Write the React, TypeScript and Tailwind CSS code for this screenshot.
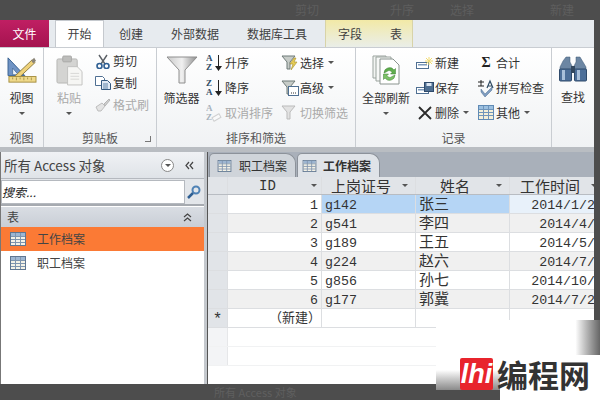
import type { ReactNode } from "react";

const CJK = "font-['Noto_Sans_CJK_SC','Liberation_Sans',sans-serif]";
const MONO = "font-['Liberation_Mono','Noto_Sans_CJK_SC',monospace]";

function TableIcon({ className = "" }: { className?: string }) {
  return (
    <svg viewBox="0 0 16 14" className={className} fill="none">
      <rect x="0.5" y="0.5" width="15" height="13" fill="#f4f2e6" stroke="#5f7691" />
      <rect x="1" y="1" width="14" height="3" fill="#9db6d2" />
      <path d="M1 4.5h14M1 7.5h14M1 10.5h14M5.5 1v12M10.5 1v12" stroke="#7f95ae" />
    </svg>
  );
}

function ViewIcon() {
  return (
    <svg viewBox="0 0 32 30" className="w-[30px] h-[28px]" fill="none">
      <path d="M1 2l18 19H1z" fill="#6f93c4" stroke="#37608f" />
      <path d="M6 13l6 7H6z" fill="#eef3fa" stroke="#37608f" strokeWidth="0.7" />
      <path d="M9 21L27 4l3 3-18 17-5 1z" fill="#efd27a" stroke="#8a7a40" />
      <path d="M26 5l3-3 2 3-3 3z" fill="#8a8478" />
      <rect x="2" y="22" width="29" height="6" fill="#efd98a" stroke="#a48d3e" />
      <path d="M6 23v2M10 23v3M14 23v2M18 23v3M22 23v2M26 23v3" stroke="#8a7530" strokeWidth="0.7" />
    </svg>
  );
}

function PasteIcon() {
  return (
    <svg viewBox="0 0 28 32" className="w-[27px] h-[31px]" fill="none">
      <rect x="1" y="4" width="21" height="25" rx="1.5" fill="#d4d4d2" stroke="#b5b5b3" />
      <rect x="7" y="1" width="9" height="6" rx="1" fill="#bdbdbb" stroke="#a8a8a6" />
      <path d="M12 12h10l5 5v14H12z" fill="#f6f6f4" stroke="#c2c2c0" />
      <path d="M15 19h9M15 22h9M15 25h9" stroke="#d6d6d4" />
    </svg>
  );
}

function ScissorsIcon() {
  return (
    <svg viewBox="0 0 14 15" className="w-[14px] h-[15px]" fill="none">
      <path d="M3 1l6 9M11 1L5 10" stroke="#5b6066" strokeWidth="1.400" />
      <ellipse cx="3.500" cy="12" rx="2.500" ry="2.500" stroke="#2f5f93" strokeWidth="1.600" />
      <ellipse cx="10.500" cy="12" rx="2.500" ry="2.500" stroke="#2f5f93" strokeWidth="1.600" />
    </svg>
  );
}

function CopyIcon() {
  return (
    <svg viewBox="0 0 16 14" className="w-4 h-[14px]" fill="none">
      <path d="M0.500 0.500h7l2 2v7h-9z" fill="#fff" stroke="#4f6f92" />
      <path d="M6.500 4.500h6l3 3v6h-9z" fill="#dfe9f4" stroke="#34597f" />
      <path d="M8 8h5M8 10h5M8 12h5" stroke="#5f83a8" />
    </svg>
  );
}

function BrushIcon() {
  return (
    <svg viewBox="0 0 16 14" className="w-4 h-[14px]" fill="none">
      <path d="M1 9l6-4 3 3-4 5H3z" fill="#e4e4e4" stroke="#bdbdbd" />
      <path d="M9 6l5-5 1 1-5 6z" fill="#cfcfcf" stroke="#b5b5b5" />
    </svg>
  );
}

function FunnelIcon({ className = "w-[32px] h-[28px]" }: { className?: string }) {
  return (
    <svg viewBox="0 0 32 28" className={className} fill="none">
      <defs>
        <linearGradient id="fn" x1="0" x2="1" y1="0" y2="0">
          <stop offset="0" stopColor="#c9c9c9" />
          <stop offset="0.5" stopColor="#f0f0f0" />
          <stop offset="1" stopColor="#8e8e8e" />
        </linearGradient>
      </defs>
      <path d="M1 1h30L19 14v13h-6V14z" fill="url(#fn)" stroke="#8f8f8f" />
    </svg>
  );
}

function SortIcon({ top, bottom, dim }: { top: string; bottom: string; dim?: boolean }) {
  return (
    <span className={`flex items-center w-[18px] h-[18px] ${dim ? "opacity-40" : ""}`}>
      <span className="flex flex-col font-['Liberation_Serif',serif] font-bold text-[9px] leading-[9px] text-[#2f4a63]">
        <span>{top}</span>
        <span>{bottom}</span>
      </span>
      {dim ? (
        <span className="ml-[-1px] w-[9px] h-[5px] rotate-[-30deg] border border-[#999] bg-white self-end mb-[2px]" />
      ) : (
        <svg viewBox="0 0 7 16" className="w-[7px] h-4 ml-[2px]" fill="#222">
          <path d="M3 0h1v11h3l-3.5 5L0 11h3z" />
        </svg>
      )}
    </span>
  );
}

function SmallFunnel({ kind }: { kind: "bolt" | "box" | "dim" }) {
  return (
    <svg viewBox="0 0 18 16" className="w-[18px] h-4" fill="none">
      <path d="M1 1h13L9 7v7H6V7z" fill={kind === "dim" ? "#e2e2e2" : "#c7ccc8"} stroke={kind === "dim" ? "#bbb" : "#6f7a78"} />
      {kind === "bolt" && <path d="M13 3l-4 6h3l-2 6 6-8h-3l2-4z" fill="#e6cc55" stroke="#a58f2b" strokeWidth="0.6" />}
      {kind === "box" && (
        <>
          <rect x="7.5" y="6.5" width="10" height="9" fill="#fff" stroke="#4f6f92" />
          <path d="M10 13h5" stroke="#333" strokeDasharray="1 1" />
        </>
      )}
    </svg>
  );
}

function RefreshIcon() {
  return (
    <svg viewBox="0 0 28 30" className="w-7 h-[30px]" fill="none">
      <path d="M1 1h13v22H1z" fill="#f2f4f2" stroke="#9aa39e" />
      <path d="M4 2h15v24H4z" fill="#f7f8f7" stroke="#9aa39e" />
      <path d="M8 4h13l6 6v19H8z" fill="#fff" stroke="#8a948f" />
      <path d="M12 18a5.5 5.5 0 0 1 10-3l1.500-1.500V19h-5l1.500-1.500a3 3 0 0 0-5-1z" fill="#5fae4d" stroke="#3c7f33" strokeWidth="0.5" />
      <path d="M23 20a5.500 5.500 0 0 1-10 3l-1.500 1.500V19h5L15 20.500a3 3 0 0 0 5 1z" fill="#7cc267" stroke="#3c7f33" strokeWidth="0.5" />
    </svg>
  );
}

function RecordIcon({ star }: { star?: boolean }) {
  return (
    <svg viewBox="0 0 18 14" className="w-[18px] h-[14px]" fill="none">
      <rect x="0.5" y="6.500" width="12" height="6" fill="#fff" stroke="#4f6f92" />
      <rect x="2" y="8" width="9" height="1.500" fill="#7f9cbd" />
      {star ? (
        <path d="M13 1v8M9 5h8M10 2l6 6M16 2l-6 6" stroke="#f2dc72" />
      ) : (
        <>
          <rect x="8.500" y="1.500" width="9" height="9" fill="#4f6f92" stroke="#2f4a6b" />
          <rect x="10.500" y="2" width="5" height="3" fill="#dce6f2" />
        </>
      )}
    </svg>
  );
}

function CrossIcon() {
  return (
    <svg viewBox="0 0 14 14" className="w-[14px] h-[14px]" fill="none">
      <path d="M1 1l12 12M13 1L1 13" stroke="#2b2b2b" strokeWidth="1.800" />
    </svg>
  );
}

function SpellIcon() {
  return (
    <svg viewBox="0 0 18 18" className="w-[18px] h-[18px]" fill="none">
      <path d="M1 3h6M4 1v6M1 7h6" stroke="#222" />
      <path d="M10 9l3-7 3 7M11 7h4" stroke="#2f4a63" strokeWidth="1.200" />
      <path d="M4 10l4 5 7-7v3l-7 7-4-5z" fill="#7e9cc0" stroke="#4f6f92" strokeWidth="0.5" />
    </svg>
  );
}

function GridIcon() {
  return (
    <svg viewBox="0 0 16 15" className="w-4 h-[15px]" fill="none">
      <rect x="0.500" y="0.500" width="15" height="14" fill="#f3efd9" stroke="#5f8ab5" />
      <rect x="1" y="1" width="14" height="3" fill="#9cc0e0" />
      <path d="M1 4.500h14M1 7.500h14M1 10.500h14M5.500 1v13M10.500 1v13" stroke="#6f95bb" />
    </svg>
  );
}

function BinocularIcon() {
  return (
    <svg viewBox="0 0 28 26" className="w-7 h-[26px]" fill="none">
      <path d="M7 1h4v5l2 4v4H1v-3l3-6z" fill="#6c86a3" stroke="#3f5874" strokeWidth="0.5" />
      <path d="M17 1h4l3 5 3 5v3H15v-4l2-4z" fill="#6c86a3" stroke="#3f5874" strokeWidth="0.5" />
      <rect x="0.500" y="13" width="12" height="12" rx="1" fill="#4d6f99" stroke="#2f4a6b" />
      <rect x="15.500" y="13" width="12" height="12" rx="1" fill="#4d6f99" stroke="#2f4a6b" />
      <rect x="3" y="14" width="3" height="10" fill="#a9c0da" />
      <rect x="18" y="14" width="3" height="10" fill="#a9c0da" />
      <rect x="12" y="10" width="4" height="7" fill="#33485f" />
    </svg>
  );
}

function DoubleChevron({ up }: { up?: boolean }) {
  return (
    <svg viewBox="0 0 9 9" className={`w-[9px] h-[9px] ${up ? "" : "-rotate-90"}`} fill="none">
      <path d="M1 4l3.500-3L8 4M1 8l3.500-3L8 8" stroke="#444" strokeWidth="1.200" />
    </svg>
  );
}

function Caret({ className = "" }: { className?: string }) {
  return <span className={`inline-block w-0 h-0 border-x-[3px] border-x-transparent border-t-[3px] border-t-[#555] ${className}`} />;
}

function Group({ label, width, launcher, children }: { label: string; width: string; launcher?: boolean; children: ReactNode }) {
  return (
    <div className={`${width} relative flex flex-col border-r border-[#c9cdd2] shrink-0`}>
      <div className="h-[81px] flex pt-[2px]">{children}</div>
      <div className="h-[18px] flex items-center justify-center text-[12px] leading-none text-[#555]">{label}</div>
      {launcher && <span className="absolute right-[5px] bottom-[5px] w-[6px] h-[6px] border-r border-b border-[#777]" />}
    </div>
  );
}

function Large({ width, icon, label, caret, dim }: { width: string; icon: ReactNode; label: string; caret?: boolean; dim?: boolean }) {
  return (
    <div className={`${width} flex flex-col items-center pt-[2px] ${dim ? "text-[#a9a9a9]" : "text-[#333]"}`}>
      <div className="h-[36px] flex items-center">{icon}</div>
      <div className="text-[12px] leading-[20px]">{label}</div>
      {caret && <Caret className="mt-[4px]" />}
    </div>
  );
}

function Small({ icon, label, caret, dim, height = "h-[25px]" }: { icon: ReactNode; label: string; caret?: boolean; dim?: boolean; height?: string }) {
  return (
    <div className={`${height} flex items-center text-[12px] leading-none whitespace-nowrap ${dim ? "text-[#aaa]" : "text-[#333]"}`}>
      <span className="w-[18px] flex justify-center shrink-0">{icon}</span>
      <span className="ml-[1px]">{label}</span>
      {caret && <Caret className="ml-[4px]" />}
    </div>
  );
}

const rows = [
  { id: 1, code: "g142", name: "张三", date: "2014/1/25" },
  { id: 2, code: "g541", name: "李四", date: "2014/4/5" },
  { id: 3, code: "g189", name: "王五", date: "2014/5/8" },
  { id: 4, code: "g224", name: "赵六", date: "2014/7/3" },
  { id: 5, code: "g856", name: "孙七", date: "2014/10/5" },
  { id: 6, code: "g177", name: "郭冀", date: "2014/7/21" },
];

function Ribbon() {
  return (
    <>
      <div className="h-[27px] flex bg-[#e7ebef] text-[12px] text-[#3f3f3f] shrink-0">
        <div className="w-[49px] bg-gradient-to-b from-[#c01f63] to-[#a5134f] text-white flex items-center justify-center">文件</div>
        <div className="w-[49px] ml-[6px] bg-white border-x border-t border-[#c5c9ce] flex items-center justify-center">开始</div>
        <div className="w-[39px] flex items-center justify-end">创建</div>
        <div className="w-[76px] flex items-center justify-end">外部数据</div>
        <div className="w-[88px] flex items-center justify-end">数据库工具</div>
        <div className="w-[88px] ml-[18px] flex bg-gradient-to-b from-[#f2e9a6] to-[#eaeee8] border-x border-[#d8d3a8]">
          <span className="w-[60px] pl-[12px] flex items-center">字段</span>
          <span className="flex items-center pl-[4px]">表</span>
        </div>
      </div>
      <div className="h-[100px] flex bg-gradient-to-b from-white to-[#f0f2f4] border-t border-[#c9cdd2] shrink-0">
        <Group label="视图" width="w-[44px]">
          <Large width="w-full" icon={<ViewIcon />} label="视图" caret />
        </Group>
        <Group label="剪贴板" width="w-[113px]" launcher>
          <Large width="w-[50px]" icon={<PasteIcon />} label="粘贴" caret dim />
          <div className="flex flex-col">
            <Small height="h-[22px]" icon={<ScissorsIcon />} label="剪切" />
            <Small height="h-[22px]" icon={<CopyIcon />} label="复制" />
            <Small height="h-[22px]" icon={<BrushIcon />} label="格式刷" dim />
          </div>
        </Group>
        <Group label="排序和筛选" width="w-[199px]">
          <Large width="w-[49px]" icon={<FunnelIcon />} label="筛选器" />
          <div className="flex flex-col w-[75px]">
            <Small icon={<SortIcon top="A" bottom="Z" />} label="升序" />
            <Small icon={<SortIcon top="Z" bottom="A" />} label="降序" />
            <Small icon={<SortIcon top="A" bottom="Z" dim />} label="取消排序" dim />
          </div>
          <div className="flex flex-col">
            <Small icon={<SmallFunnel kind="bolt" />} label="选择" caret />
            <Small icon={<SmallFunnel kind="box" />} label="高级" caret />
            <Small icon={<SmallFunnel kind="dim" />} label="切换筛选" dim />
          </div>
        </Group>
        <Group label="记录" width="w-[196px]">
          <Large width="w-[60px]" icon={<RefreshIcon />} label="全部刷新" caret />
          <div className="flex flex-col w-[61px]">
            <Small icon={<RecordIcon star />} label="新建" />
            <Small icon={<RecordIcon />} label="保存" />
            <Small icon={<CrossIcon />} label="删除" caret />
          </div>
          <div className="flex flex-col">
            <Small icon={<span className="font-['Liberation_Serif',serif] font-bold text-[14px] text-[#222]">Σ</span>} label="合计" />
            <Small icon={<SpellIcon />} label="拼写检查" />
            <Small icon={<GridIcon />} label="其他" caret />
          </div>
        </Group>
        <div className="flex-1 pt-[1px]">
          <Large width="w-full" icon={<BinocularIcon />} label="查找" />
        </div>
      </div>
    </>
  );
}

function NavPane() {
  return (
    <div className="w-[204px] bg-white border-l border-[#777] flex flex-col text-[#444] shrink-0">
      <div className="h-[27px] bg-gradient-to-b from-[#f0f2f5] to-[#dfe3e8] flex items-center pl-[3px] text-[13.500px] border-b border-[#b5b9bf]">
        <span>所有 Access 对象</span>
        <span className="ml-auto w-[13px] h-[13px] rounded-full border border-[#888] bg-white flex items-center justify-center">
          <Caret />
        </span>
        <span className="w-[30px] flex justify-center">
          <DoubleChevron />
        </span>
      </div>
      <div className="h-[27px] bg-[#e3e6ea] flex items-center border-b-2 border-[#a6aab0]">
        <div className="w-[184px] h-[24px] bg-white border border-[#b5b9bf] flex items-center text-[12px] italic text-[#222]">搜索...</div>
        <svg viewBox="0 0 14 14" className="w-[14px] h-[14px] ml-[2px]" fill="none">
          <circle cx="9" cy="5" r="3.500" stroke="#4f82b5" strokeWidth="2" />
          <path d="M6 8l-5 5" stroke="#2f5f93" strokeWidth="2.500" />
        </svg>
      </div>
      <div className="h-[20px] mt-[1px] bg-gradient-to-b from-[#d9dde3] to-[#c9ced6] flex items-center pl-[6px] pr-[12px] justify-between text-[12px]">
        <span>表</span>
        <DoubleChevron up />
      </div>
      <div className="h-[24px] bg-[#fb7a35] flex items-center pl-[9px] text-[12px]">
        <TableIcon className="w-[16px] h-[14px]" />
        <span className="ml-[11px]">工作档案</span>
      </div>
      <div className="h-[24px] flex items-center pl-[9px] text-[12px]">
        <TableIcon className="w-[16px] h-[14px]" />
        <span className="ml-[11px]">职工档案</span>
      </div>
    </div>
  );
}

function DocTab({ label, active }: { label: string; active?: boolean }) {
  return (
    <div className={`h-[24px] flex items-center rounded-t-[5px] rounded-tr-[10px] text-[12px] border-t border-x border-[#8c929a] ${active ? "bg-[#dfe3e8] font-semibold pl-[4px] pr-[8px]" : "bg-[#cfd4da] pl-[7px] pr-[8px]"} text-[#333]`}>
      <TableIcon className="w-[15px] h-[12px]" />
      <span className={active ? "ml-[6px]" : "ml-[7px]"}>{label}</span>
    </div>
  );
}

function Cell({ width, className = "", children }: { width: string; className?: string; children?: ReactNode }) {
  return <div className={`${width} shrink-0 border-r border-[#dcdee1] flex items-center whitespace-nowrap ${className}`}>{children}</div>;
}

function Sheet() {
  return (
    <div className="flex-1 min-w-0 flex flex-col overflow-hidden border-l border-[#555] bg-white">
      <div className="h-[25px] bg-[#a9b0ba] flex items-end gap-[1px] pl-[1px] shrink-0">
        <DocTab label="职工档案" />
        <DocTab label="工作档案" active />
      </div>
      <div className="h-[18px] flex bg-[#e1e4e8] text-[#333] text-[15px] leading-none border-b border-[#b8bcc2] shrink-0">
        <Cell width="w-[20px]" />
        <Cell width="w-[94px]" className={`${MONO} relative pl-[31px] text-[14px]`}>
          ID
          <Caret className="absolute right-[4px]" />
        </Cell>
        <Cell width="w-[94px]" className="relative pl-[9px]">
          上岗证号
          <Caret className="absolute right-[7px]" />
        </Cell>
        <Cell width="w-[94px]" className="relative pl-[24px]">
          姓名
          <Caret className="absolute right-[7px]" />
        </Cell>
        <Cell width="w-[94px]" className="relative pl-[10px]">
          工作时间
          <Caret className="absolute right-[6px]" />
        </Cell>
      </div>
      {rows.map((r, i) => {
        const selected = i === 0;
        const even = i % 2 === 1;
        const bg = even ? "bg-[#f0f0f0]" : "bg-white";
        return (
          <div key={r.id} className={`h-[19px] flex text-[13.300px] leading-none text-[#333] border-b border-[#dcdee1] shrink-0 ${MONO}`}>
            <Cell width="w-[20px]" className="bg-[#e1e4e8]" />
            <Cell width="w-[94px]" className={`${bg} justify-end pr-[3px] pt-[3px]`}>{r.id}</Cell>
            <Cell width="w-[94px]" className={`${selected ? "bg-[#b5d5f5]" : bg} pl-[3px] pt-[3px]`}>{r.code}</Cell>
            <Cell width="w-[94px]" className={`${selected ? "bg-[#b5d5f5]" : bg} pl-[3px] pt-[2px] text-[15px]`}>{r.name}</Cell>
            <Cell width="w-[94px]" className={`${selected ? "bg-[#e8f1fa]" : bg} justify-end pt-[3px]`}>{r.date}</Cell>
          </div>
        );
      })}
      <div className={`h-[19px] flex text-[13px] leading-none text-[#333] border-b border-[#dcdee1] shrink-0 ${MONO}`}>
        <Cell width="w-[20px]" className="bg-[#e1e4e8] justify-center text-[16px] pt-[3px]">*</Cell>
        <Cell width="w-[94px]" className="justify-end pt-[1px]">（新建）</Cell>
        <Cell width="w-[94px]" />
        <Cell width="w-[94px]" />
      </div>
      {[0, 1].map((n) => (
        <div key={n} className="h-[19px] flex border-b border-[#f1f2f3] shrink-0">
          <div className="w-[20px] bg-[#f3f4f6] border-r border-[#e6e7e9]" />
        </div>
      ))}
    </div>
  );
}

function Watermark() {
  return (
    <div className="absolute right-0 bottom-0 w-[164px] h-[80px] flex flex-col">
      <div className="h-[35px] bg-gradient-to-r from-white from-[85%] to-[#666]" />
      <div className="h-[45px] bg-white relative">
        <div className="absolute left-0 bottom-0 w-[64px] h-[30px] bg-gradient-to-b from-white to-[#555]" />
        <div className="absolute left-0 bottom-0 w-[64px] h-[10px] bg-[#4d4d4d]" />
        <div className="absolute left-[24px] top-[3px] w-[33px] h-[32px] bg-[#e8242c] rounded-[2px] flex items-center justify-center overflow-hidden font-['Liberation_Sans',sans-serif] italic text-white text-[27px] font-bold leading-none">
          lhi
        </div>
        <div className="absolute left-[61px] top-[-1px] text-[31px] leading-[40px] font-bold text-[#333] whitespace-nowrap">编程网</div>
      </div>
    </div>
  );
}

export default function App() {
  return (
    <div className={`w-[600px] h-[400px] overflow-hidden relative flex flex-col bg-[#4d4d4d] ${CJK}`}>
      <div className="h-[20px] shrink-0 flex items-center pl-[295px] text-[12px] text-[#5e5e5e]">
        <span>剪切</span>
        <span className="ml-[71px]">升序</span>
        <span className="ml-[36px]">选择</span>
        <span className="ml-[76px]">新建</span>
      </div>
      <div className="flex-1 min-h-0 flex">
        <div className="w-[594px] flex flex-col shrink-0">
          <Ribbon />
          <div className="h-[5px] bg-[#b9bdc2] shrink-0" />
          <div className="flex-1 min-h-0 flex">
            <NavPane />
            <div className="w-[3px] bg-[#c4c8cd] shrink-0" />
            <Sheet />
          </div>
        </div>
      </div>
      <div className="h-[16px] shrink-0 flex items-center pl-[214px] text-[11px] text-[#5f5f5f]">所有 Access 对象</div>
      <Watermark />
    </div>
  );
}
